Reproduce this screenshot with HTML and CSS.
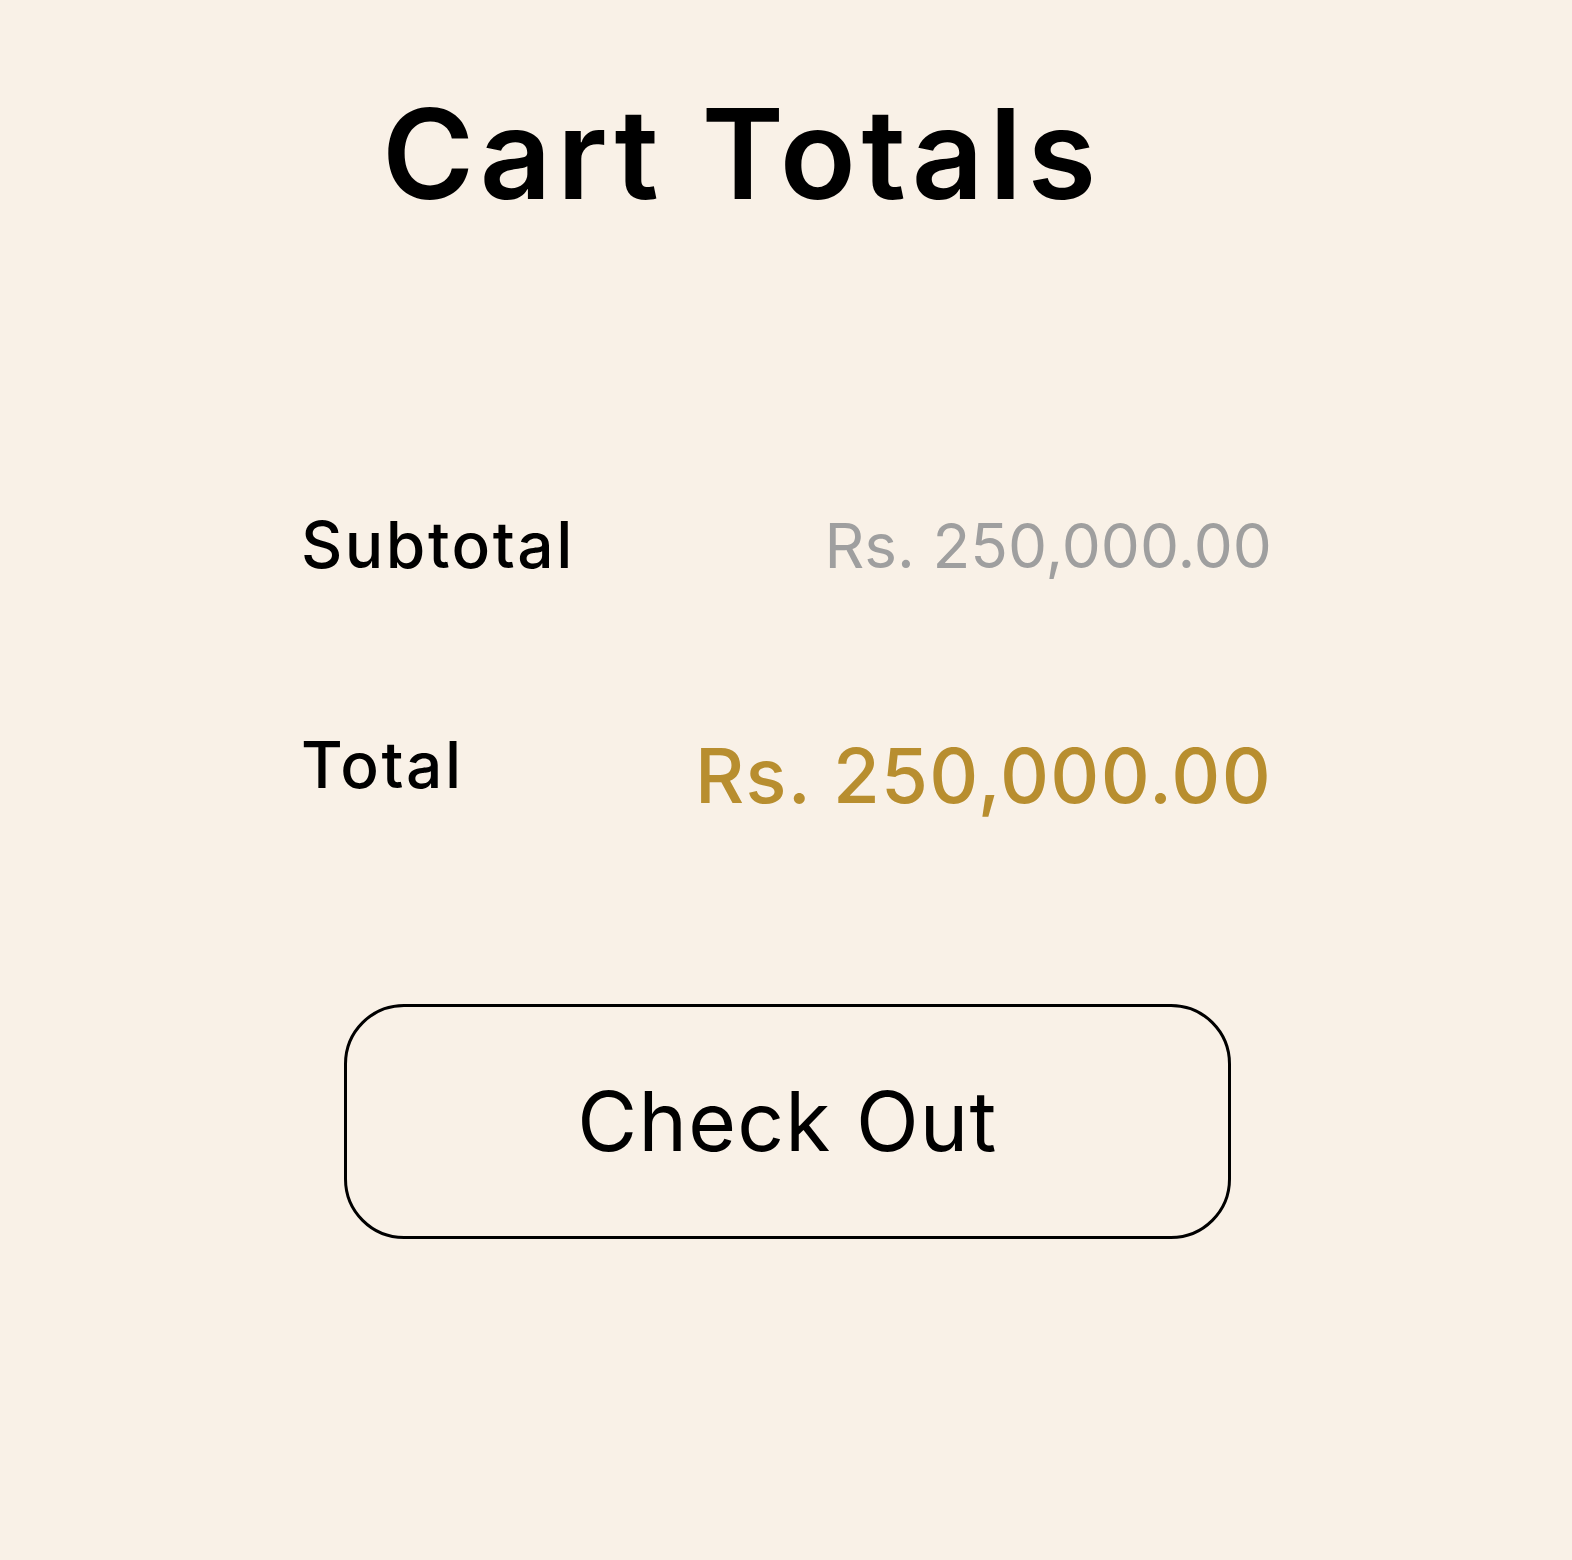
FILE: index.html
```html
<!DOCTYPE html>
<html>
<head>
<meta charset="utf-8">
<link rel="stylesheet" href="styles.css">
</head>
<body>
<main class="totals">
  <h1 class="title">Cart Totals</h1>
  <div class="rows">
    <div class="row row-sub">
      <span class="label">Subtotal</span>
      <span class="value-sub">Rs. 250,000.00</span>
    </div>
    <div class="row row-total">
      <span class="label">Total</span>
      <span class="value-total">Rs. 250,000.00</span>
    </div>
  </div>
  <button class="checkout">Check Out</button>
</main>
</body>
</html>
```
FILE: styles.css
```css
html, body {
  margin: 0;
  padding: 0;
  background: #F9F1E7;
}
body {
  width: 1572px;
  height: 1560px;
  font-family: Inter, "Open Sans", sans-serif;
  color: #000;
}
.totals {
  width: 971px;
  margin-left: 301px;
  padding-top: 91px;
  display: flex;
  flex-direction: column;
}
.title {
  margin: 0 0 0 81px;
  font-size: 125px;
  font-weight: 600;
  line-height: 125px;
  letter-spacing: 5.6px;
}
.rows {
  margin-top: 297px;
  display: flex;
  flex-direction: column;
  gap: 156px;
}
.row {
  display: flex;
  justify-content: space-between;
  align-items: flex-start;
}
.label {
  font-size: 64px;
  font-weight: 500;
  line-height: 64px;
  letter-spacing: 2.5px;
}
.value-sub {
  margin-top: 2px;
  font-size: 62px;
  font-weight: 400;
  line-height: 62px;
  color: #9F9F9F;
}
.value-total {
  margin-top: 4px;
  font-size: 76px;
  font-weight: 500;
  line-height: 76px;
  letter-spacing: 1.3px;
  color: #B88E2F;
}
.checkout {
  align-self: flex-start;
  margin-top: 191px;
  margin-left: 43px;
  width: 887px;
  height: 235px;
  border: 3px solid #000;
  border-radius: 60px;
  background: transparent;
  font-family: Inter, "Open Sans", sans-serif;
  font-size: 82px;
  font-weight: 400;
  letter-spacing: 1.25px;
  color: #000;
  cursor: pointer;
}
```
